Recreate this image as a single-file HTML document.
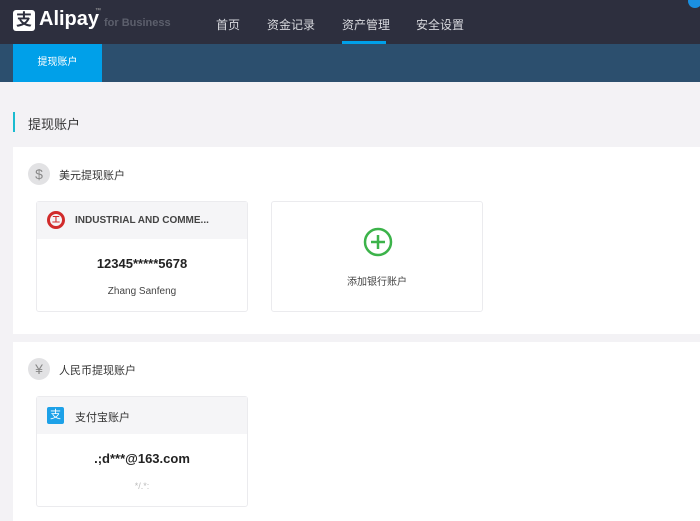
<!DOCTYPE html>
<html><head><meta charset="utf-8"><style>
*{margin:0;padding:0;box-sizing:border-box}
body{width:700px;height:521px;overflow:hidden;background:#f3f2f5;font-family:"Liberation Sans","Noto Sans CJK SC",sans-serif;position:relative}
.a{position:absolute}
.hdr{left:0;top:0;width:700px;height:44px;background:#2d2f3e}
.sub{left:0;top:44px;width:700px;height:38px;background:#2c4f6e}
.nav{top:16px;color:#d8d9de;font-size:12px}
.panel{left:13px;width:687px;background:#fff}
.card{background:#fff;border:1px solid #ebebee;border-radius:3px}
.ch{left:0;top:0;right:0;height:37px;background:#f5f5f7}
.ico{width:22px;height:22px;border-radius:50%;background:#e2e2e4;color:#888;font-size:14px;text-align:center;line-height:22px}
</style></head><body>
<div class="a hdr"></div>
<div class="a" style="left:13px;top:10px;width:22px;height:21px;background:#fff;border-radius:3px;color:#2d2f3e;font-size:16px;font-weight:bold;text-align:center;line-height:21px">支</div>
<div class="a" style="left:39px;top:8px;color:#fff;font-size:20px;font-weight:bold">Alipay</div>
<div class="a" style="left:95px;top:8px;color:#aaa;font-size:6px">™</div>
<div class="a" style="left:104px;top:17px;color:#5c5f6c;font-size:11px;font-weight:bold">for Business</div>
<div class="a nav" style="left:216px">首页</div>
<div class="a nav" style="left:267px">资金记录</div>
<div class="a nav" style="left:342px">资产管理</div>
<div class="a nav" style="left:416px">安全设置</div>
<div class="a" style="left:342px;top:41px;width:44px;height:3px;background:#00a0e9"></div>
<div class="a" style="left:688px;top:-6px;width:14px;height:14px;border-radius:50%;background:#1a8fe0"></div>
<div class="a sub"></div>
<div class="a" style="left:13px;top:44px;width:89px;height:38px;background:#00a0e9;color:#fff;font-size:10px;text-align:center;line-height:38px">提现账户</div>
<div class="a" style="left:13px;top:112px;width:2px;height:20px;background:#1abbd0"></div>
<div class="a" style="left:28px;top:114px;font-size:13px;color:#333">提现账户</div>

<div class="a panel" style="top:147px;height:187px"></div>
<div class="a ico" style="left:28px;top:163px">$</div>
<div class="a" style="left:59px;top:167px;font-size:11px;color:#333">美元提现账户</div>
<div class="a card" style="left:36px;top:201px;width:212px;height:111px">
 <div class="a ch"></div>
 <div class="a" style="left:10px;top:9px;width:18px;height:18px;border-radius:50%;border:3px solid #d12b2b;color:#d12b2b;font-size:8px;text-align:center;line-height:12px;font-weight:bold">工</div>
 <div class="a" style="left:38px;top:13px;font-size:10px;font-weight:bold;color:#444">INDUSTRIAL AND COMME...</div>
 <div class="a" style="left:0;right:0;top:54px;text-align:center;font-size:13px;font-weight:bold;color:#222">12345*****5678</div>
 <div class="a" style="left:0;right:0;top:84px;text-align:center;font-size:10px;color:#444">Zhang Sanfeng</div>
</div>
<div class="a card" style="left:271px;top:201px;width:212px;height:111px">
 <svg class="a" style="left:91px;top:25px" width="30" height="30" viewBox="0 0 30 30"><circle cx="15" cy="15" r="13" fill="none" stroke="#3cb34a" stroke-width="2.5"/><path d="M15 8v14M8 15h14" stroke="#3cb34a" stroke-width="2.5"/></svg>
 <div class="a" style="left:0;right:0;top:71px;text-align:center;font-size:10px;color:#444">添加银行账户</div>
</div>

<div class="a panel" style="top:342px;height:179px"></div>
<div class="a ico" style="left:28px;top:358px">¥</div>
<div class="a" style="left:59px;top:362px;font-size:11px;color:#333">人民币提现账户</div>
<div class="a card" style="left:36px;top:396px;width:212px;height:111px">
 <div class="a ch"></div>
 <div class="a" style="left:10px;top:10px;width:17px;height:17px;background:#1da1e8;border-radius:2px;color:#fff;font-size:11px;text-align:center;line-height:17px">支</div>
 <div class="a" style="left:38px;top:12px;font-size:11px;color:#333">支付宝账户</div>
 <div class="a" style="left:0;right:0;top:54px;text-align:center;font-size:13px;font-weight:bold;color:#222">.;d***@163.com</div>
 <div class="a" style="left:0;right:0;top:84px;text-align:center;font-size:9px;color:#bbb">*/.*:</div>
</div>
</body></html>
